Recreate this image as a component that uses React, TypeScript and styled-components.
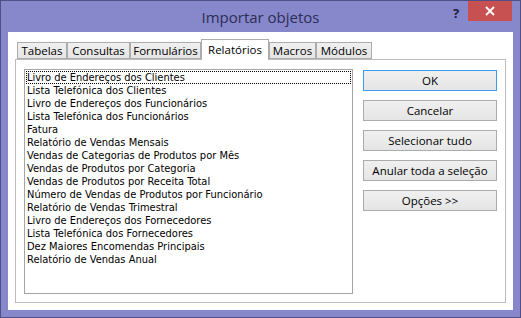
import React from "react";
import styled, { createGlobalStyle } from "styled-components";

const GlobalStyle = createGlobalStyle`
  html, body {
    margin: 0;
    padding: 0;
    background: #ffffff;
  }
`;

const uiFont = `"Open Sans", "Noto Sans", sans-serif`;
const listFont = `"DejaVu Sans Condensed", "DejaVu Sans", sans-serif`;

const Window = styled.div`
  width: 521px;
  height: 318px;
  box-sizing: border-box;
  border: 1px solid #4f4f86;
  background: #8787cc;
  display: flex;
  flex-direction: column;
`;

const TitleBar = styled.div`
  height: 31px;
  display: flex;
  align-items: center;
  position: relative;
`;

const Title = styled.div`
  flex: 1;
  text-align: center;
  font-family: ${uiFont};
  font-size: 15px;
  color: #2d2d55;
  padding-top: 1px;
`;

const HelpButton = styled.div`
  position: absolute;
  left: 448px;
  top: 2px;
  width: 14px;
  height: 20px;
  font-family: ${uiFont};
  font-weight: 700;
  font-size: 13px;
  line-height: 20px;
  color: #1c1c3a;
  text-align: center;
`;

const CloseButton = styled.div`
  position: absolute;
  left: 467px;
  top: 0;
  width: 44px;
  height: 20px;
  background: #c75050;
  display: flex;
  align-items: center;
  justify-content: center;
`;

const Client = styled.div`
  flex: 1;
  margin: 0 7px 7px 7px;
  background: #ffffff;
  padding: 7px;
  display: flex;
  flex-direction: column;
`;

const TabStrip = styled.div`
  display: flex;
  align-items: flex-end;
  height: 20px;
  padding-left: 2px;
  position: relative;
  z-index: 1;
`;

const Tab = styled.div<{ $w: number; $active?: boolean }>`
  width: ${(p) => p.$w}px;
  box-sizing: border-box;
  height: ${(p) => (p.$active ? 21 : 17)}px;
  margin-bottom: ${(p) => (p.$active ? -1 : 0)}px;
  border: 1px solid #acacac;
  border-bottom: ${(p) => (p.$active ? "none" : "1px solid #acacac")};
  background: ${(p) =>
    p.$active ? "#ffffff" : "linear-gradient(#f0f0f0, #e5e5e5)"};
  font-family: ${uiFont};
  font-size: 11.5px;
  color: #000000;
  display: flex;
  justify-content: center;
  align-items: ${(p) => (p.$active ? "flex-start" : "center")};
  padding-top: ${(p) => (p.$active ? 2 : 0)}px;
  white-space: nowrap;
`;

const Panel = styled.div`
  flex: 1;
  border: 1px solid #bdbdbd;
  display: flex;
  align-items: flex-start;
  padding: 9px 0 0 8px;
`;

const ListBox = styled.div`
  width: 329px;
  height: 225px;
  box-sizing: border-box;
  border: 1px solid #a5a5a5;
  padding-top: 1px;
  display: flex;
  flex-direction: column;
`;

const ListItem = styled.div<{ $focused?: boolean }>`
  height: 13px;
  line-height: 13px;
  padding-left: 1px;
  font-family: ${listFont};
  font-size: 11px;
  color: #000000;
  white-space: nowrap;
  outline: ${(p) => (p.$focused ? "1px dotted #000" : "none")};
  outline-offset: -1px;
  margin: 0 1px;
`;

const ButtonColumn = styled.div`
  display: flex;
  flex-direction: column;
  gap: 9px;
  margin-left: 10px;
  margin-top: 1px;
`;

const Button = styled.div<{ $default?: boolean }>`
  width: 134px;
  height: 21px;
  box-sizing: border-box;
  border: 1px solid ${(p) => (p.$default ? "#3c9ced" : "#acacac")};
  background: linear-gradient(#f0f0f0, #e5e5e5);
  font-family: ${uiFont};
  font-size: 11.5px;
  color: #000000;
  display: flex;
  align-items: center;
  justify-content: center;
`;

const tabs = [
  { label: "Tabelas", w: 50 },
  { label: "Consultas", w: 63 },
  { label: "Formulários", w: 71 },
  { label: "Relatórios", w: 68, active: true },
  { label: "Macros", w: 47 },
  { label: "Módulos", w: 56 },
];

const reports = [
  "Livro de Endereços dos Clientes",
  "Lista Telefónica dos Clientes",
  "Livro de Endereços dos Funcionários",
  "Lista Telefónica dos Funcionários",
  "Fatura",
  "Relatório de Vendas Mensais",
  "Vendas de Categorias de Produtos por Mês",
  "Vendas de Produtos por Categoria",
  "Vendas de Produtos por Receita Total",
  "Número de Vendas de Produtos por Funcionário",
  "Relatório de Vendas Trimestral",
  "Livro de Endereços dos Fornecedores",
  "Lista Telefónica dos Fornecedores",
  "Dez Maiores Encomendas Principais",
  "Relatório de Vendas Anual",
];

const buttons = [
  "OK",
  "Cancelar",
  "Selecionar tudo",
  "Anular toda a seleção",
  "Opções >>",
];

export default function App() {
  return (
    <>
      <GlobalStyle />
      <Window>
        <TitleBar>
          <Title>Importar objetos</Title>
          <HelpButton>?</HelpButton>
          <CloseButton>
            <svg width="10" height="10" viewBox="0 0 10 10">
              <path
                d="M1 1 L9 9 M9 1 L1 9"
                stroke="#ffffff"
                strokeWidth="1.8"
                fill="none"
              />
            </svg>
          </CloseButton>
        </TitleBar>
        <Client>
          <TabStrip>
            {tabs.map((t) => (
              <Tab key={t.label} $w={t.w} $active={t.active}>
                {t.label}
              </Tab>
            ))}
          </TabStrip>
          <Panel>
            <ListBox>
              {reports.map((r, i) => (
                <ListItem key={r} $focused={i === 0}>
                  {r}
                </ListItem>
              ))}
            </ListBox>
            <ButtonColumn>
              {buttons.map((b, i) => (
                <Button key={b} $default={i === 0}>
                  {b}
                </Button>
              ))}
            </ButtonColumn>
          </Panel>
        </Client>
      </Window>
    </>
  );
}
